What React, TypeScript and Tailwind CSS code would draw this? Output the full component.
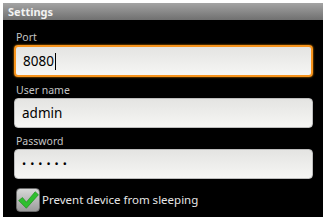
import React from "react";

const font = { fontFamily: '"Noto Sans", "Open Sans", sans-serif' };

function Field({ label, children, focused, className }: { label: string; children: React.ReactNode; focused?: boolean; className?: string }) {
  return (
    <div className={className}>
      <div className="h-[14px] text-[10.5px] leading-[14px] text-[#c4c4c4] pl-[2px]">{label}</div>
      <div
        className={
          "mt-px flex items-center rounded-[4px] bg-gradient-to-b from-[#e4e4e2] to-[#f6f6f4] pl-[7px] text-[13.5px] text-black " +
          (focused ? "h-[32px] border-2 border-[#f7941d] shadow-[0_0_2px_#ff9900]" : "h-[30px] border border-[#bdbdbd]")
        }
      >
        {children}
      </div>
    </div>
  );
}

export default function App() {
  return (
    <div className="w-[329px] h-[220px] bg-white pt-[3px] pl-[3px]" style={font}>
      <div className="w-[320px] h-[214px] bg-black">
        <div className="h-[17px] bg-gradient-to-b from-[#a4a4a4] to-[#707070] px-[5px] text-[11px] font-bold leading-[17px] text-[#f2f2f2]">
          Settings
        </div>
        <div className="pl-[11px] pr-[10px]">
          <Field label="Port" focused className="mt-[10px]">
            <span>8080</span>
            <span className="ml-px h-[17px] w-px bg-black" />
          </Field>
          <Field label="User name" className="mt-[6px]">
            <span>admin</span>
          </Field>
          <Field label="Password" className="mt-[6px]">
            <span className="text-[11px] tracking-[4px]">••••••</span>
          </Field>
          <div className="mt-[9px] flex items-center">
            <div className="ml-[2px] flex h-[24px] w-[24px] items-center justify-center rounded-[4px] bg-gradient-to-b from-[#d8d8d8] to-[#9c9c9c] border border-[#6a6a6a]">
              <svg width="22" height="20" viewBox="0 0 20 18">
                <path d="M1.5 9.5 L5 6.8 L8.5 11 L16.5 1.5 L19.5 4.2 L8.5 16.5 Z" fill="#2fbf2f" stroke="#1a8a1a" strokeWidth="0.6" strokeLinejoin="round" />
              </svg>
            </div>
            <span className="ml-[2px] text-[11.5px] text-[#e6e6e6]">Prevent device from sleeping</span>
          </div>
        </div>
      </div>
    </div>
  );
}
